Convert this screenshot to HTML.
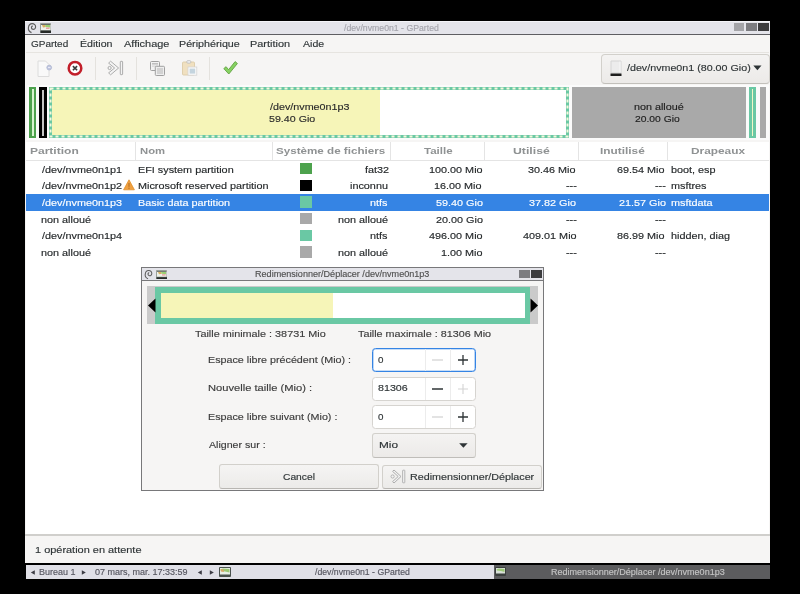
<!DOCTYPE html>
<html><head><meta charset="utf-8">
<style>
html,body{margin:0;padding:0;width:800px;height:594px;overflow:hidden;background:#000;}
body{position:relative;font-family:"Liberation Sans",sans-serif;}
.a{position:absolute;}
.t{position:absolute;white-space:pre;line-height:12px;transform-origin:0 0;-webkit-text-stroke:0.15px currentColor;}
</style></head><body>
<div style="position:absolute;left:0;top:0;width:800px;height:594px;overflow:hidden;filter:blur(0.35px);"><!-- main window -->
<div class="a" style="left:25px;top:21px;width:745px;height:542px;background:#f6f5f4;"></div>
<!-- title bar -->
<div class="a" style="left:25px;top:21px;width:745px;height:13px;background:#e4e4ea;"></div>
<div class="a" style="left:25px;top:21px;width:745px;height:1px;background:#f4f4f8;"></div>
<div class="a" style="left:25px;top:34px;width:745px;height:1px;background:#5e5e62;"></div>
<svg class="a" style="left:26px;top:22px;" width="12" height="12" viewBox="0 0 12 12"><path d="M5.5 10.6 C3 9.6 2.2 7.5 2.4 5.8 C2.7 3 4.5 1.7 6.2 1.7 C8.3 1.7 9.7 3.2 9.6 5 C9.5 6.7 8.3 7.5 7 7.3 C5.9 7.1 5.3 6.2 5.5 5.2 C5.7 4.5 6.2 4.1 6.8 4.2" fill="none" stroke="#5c5c5c" stroke-width="1.15"/></svg>
<svg class="a" style="left:40px;top:23px;" width="11" height="10" viewBox="0 0 11 10" preserveAspectRatio="none"><rect x="0" y="0" width="11" height="10" rx="0.8" fill="#9aa09a"/><rect x="1" y="1" width="9.5" height="6" fill="#eef2ea"/><rect x="1" y="1" width="9.5" height="1" fill="#6a6e6a"/><path d="M2 2 L5 2 L6 4 L3 4.5 Z" fill="#d8b060"/><path d="M5 2 L10 2 L10 4.5 L6 4 Z" fill="#98d070"/><rect x="6" y="4.6" width="3.5" height="1.2" fill="#e89090"/><rect x="0.5" y="7.6" width="10.5" height="2.4" fill="#262a28"/></svg>
<div class="a" style="left:734px;top:23px;width:10px;height:8px;background:#a4a4a8;"></div>
<div class="a" style="left:746px;top:23px;width:11px;height:8px;background:#7c7c80;"></div>
<div class="a" style="left:758px;top:23px;width:11px;height:8px;background:#3c3c3e;"></div>

<!-- menu bar bottom -->
<div class="a" style="left:26px;top:52px;width:743px;height:1px;background:#e6e4e0;"></div>

<!-- toolbar: new -->
<svg class="a" style="left:36px;top:59px;" width="17" height="19" viewBox="0 0 17 19"><path d="M2 2 L9.5 2 L13 5.5 L13 17.5 L2 17.5 Z" fill="#f9f9f9" stroke="#dcdcdc" stroke-width="1"/><circle cx="13.2" cy="8.6" r="2.4" fill="#c0c6e0" stroke="#a8b0cc" stroke-width="0.7"/><rect x="12" y="8.2" width="2.4" height="0.8" fill="#f0f2fa"/></svg>
<!-- toolbar: delete -->
<svg class="a" style="left:66px;top:59px;" width="18" height="18" viewBox="0 0 18 18"><circle cx="9" cy="9.2" r="6.3" fill="#fff" stroke="#c21f2a" stroke-width="2.5"/><path d="M6.9 7.1 L11.1 11.3 M11.1 7.1 L6.9 11.3" stroke="#3a3a3a" stroke-width="1.6"/></svg>
<!-- separators -->
<div class="a" style="left:95px;top:57px;width:1px;height:23px;background:#e4e2de;"></div>
<div class="a" style="left:136px;top:57px;width:1px;height:23px;background:#e4e2de;"></div>
<div class="a" style="left:209px;top:57px;width:1px;height:23px;background:#e4e2de;"></div>
<!-- toolbar: resize/move -->
<svg class="a" style="left:107px;top:60px;" width="17" height="16" viewBox="0 0 17 16"><path d="M3.6 1.2 L11.6 8 L3.6 14.8 L1.6 12.9 L7.6 8 L1.6 3.1 Z" fill="#f4f4f4" stroke="#a4a4a4" stroke-width="0.9" stroke-linejoin="round"/><circle cx="2.6" cy="8" r="1.6" fill="#f4f4f4" stroke="#a4a4a4" stroke-width="0.9"/><rect x="13.3" y="1.3" width="2.3" height="13.4" rx="0.6" fill="#f4f4f4" stroke="#a4a4a4" stroke-width="0.9"/></svg>
<!-- toolbar: copy -->
<svg class="a" style="left:149px;top:60px;" width="17" height="17" viewBox="0 0 17 17"><rect x="1.5" y="1.5" width="9" height="9" rx="1" fill="#f2f2f2" stroke="#a0a0a0" stroke-width="1"/><rect x="3" y="3" width="6" height="1.6" fill="#c0c0c0"/><rect x="3" y="5.6" width="6" height="1" fill="#d0d0d0"/><rect x="6.3" y="6.3" width="9.2" height="9.2" rx="1" fill="#eeeeee" stroke="#a0a0a0" stroke-width="1"/><rect x="8" y="8" width="6" height="6" fill="#d2d2d2"/></svg>
<!-- toolbar: paste -->
<svg class="a" style="left:181px;top:59px;" width="17" height="18" viewBox="0 0 17 18"><rect x="1.5" y="3" width="12" height="13" rx="1" fill="#f0e0c0" stroke="#dccca8" stroke-width="0.9"/><rect x="5.8" y="1.6" width="4" height="2.6" rx="1" fill="#ececec" stroke="#b8b8b8" stroke-width="0.7"/><rect x="7" y="8" width="8.8" height="8.2" fill="#fafafa" stroke="#d4d4d4" stroke-width="0.8"/><rect x="8.6" y="9.6" width="5.6" height="5" fill="#c4d4de"/></svg>
<!-- toolbar: apply -->
<svg class="a" style="left:222px;top:60px;" width="17" height="16" viewBox="0 0 17 16"><path d="M1.8 8.6 L4.1 6.7 L6.6 9.7 L13.1 1.6 L15.4 3.5 L6.8 14 Z" fill="#86d262" stroke="#62a242" stroke-width="0.9" stroke-linejoin="round"/></svg>

<!-- device combo -->
<div class="a" style="left:601px;top:54px;width:169px;height:29.5px;box-sizing:border-box;border:1px solid #d2d0cb;border-bottom-color:#c2c0bb;border-radius:4px;background:linear-gradient(#f4f3f2,#eceae8);"></div>
<svg class="a" style="left:609px;top:60px;" width="15" height="17" viewBox="0 0 15 17"><path d="M2 1 L12 1 L12 13 L2 13 Z" fill="#ececec" stroke="#d4d4d4" stroke-width="1"/><path d="M11 1.5 L11 12.5" stroke="#f8f8f8" stroke-width="1"/><rect x="1.5" y="13.5" width="11" height="2.5" fill="#1e1e1e"/></svg>
<svg class="a" style="left:753px;top:65px;" width="9" height="6" viewBox="0 0 9 6"><path d="M0.3 0.5 L8.5 0.5 L4.4 5.2 Z" fill="#2e3436"/></svg>

<!-- partition bar -->
<div class="a" style="left:27px;top:85px;width:742px;height:55px;background:#fbfbfb;"></div>
<div class="a" style="left:29px;top:87px;width:7px;height:51px;background:#4da24d;"></div>
<div class="a" style="left:32px;top:89px;width:2px;height:47px;background:#d8f4d0;"></div>
<div class="a" style="left:39px;top:87px;width:8px;height:51px;background:#000;"></div>
<div class="a" style="left:41.5px;top:89.5px;width:2.5px;height:46px;background:#c4c4c4;"></div>
<!-- p3 with dashed border -->
<div class="a" style="left:49px;top:87px;width:520px;height:51px;background:#fff;"></div>
<div class="a" style="left:52px;top:90px;width:328px;height:45px;background:#f6f5b8;"></div>
<svg class="a" style="left:49px;top:87px;" width="520" height="51"><rect x="1.5" y="1.5" width="517" height="48" fill="none" stroke="#6ac8a4" stroke-width="3"/><rect x="1.5" y="1.5" width="517" height="48" fill="none" stroke="#f4f8dc" stroke-width="2" stroke-dasharray="3 3"/></svg>
<div class="a" style="left:571.5px;top:87px;width:174.5px;height:51px;background:#a9a9a9;"></div>
<div class="a" style="left:749px;top:87px;width:7px;height:51px;background:#6ac8a4;"></div>
<div class="a" style="left:751.8px;top:89px;width:1.6px;height:47px;background:#f4f6c8;"></div>
<div class="a" style="left:759.5px;top:87px;width:6.5px;height:51px;background:#a9a9a9;"></div>

<!-- table -->
<div class="a" style="left:26px;top:142px;width:743px;height:392px;background:#fff;"></div>
<div class="a" style="left:26px;top:160px;width:743px;height:1px;background:#e4e4e4;"></div>
<div class="a" style="left:135px;top:142px;width:1px;height:18px;background:#e4e4e4;"></div>
<div class="a" style="left:272px;top:142px;width:1px;height:18px;background:#e4e4e4;"></div>
<div class="a" style="left:390px;top:142px;width:1px;height:18px;background:#e4e4e4;"></div>
<div class="a" style="left:484px;top:142px;width:1px;height:18px;background:#e4e4e4;"></div>
<div class="a" style="left:578px;top:142px;width:1px;height:18px;background:#e4e4e4;"></div>
<div class="a" style="left:667px;top:142px;width:1px;height:18px;background:#e4e4e4;"></div>
<!-- selected row -->
<div class="a" style="left:26px;top:193.8px;width:743px;height:16.8px;background:#3584e4;"></div>
<!-- fs color squares -->
<div class="a" style="left:300.2px;top:163.00px;width:11.5px;height:11.3px;background:#4da24d;"></div>
<div class="a" style="left:300.2px;top:179.65px;width:11.5px;height:11.3px;background:#000;"></div>
<div class="a" style="left:300.2px;top:196.30px;width:11.5px;height:11.3px;background:#6ac8a4;"></div>
<div class="a" style="left:300.2px;top:212.95px;width:11.5px;height:11.3px;background:#a9a9a9;"></div>
<div class="a" style="left:300.2px;top:229.60px;width:11.5px;height:11.3px;background:#6ac8a4;"></div>
<div class="a" style="left:300.2px;top:246.25px;width:11.5px;height:11.3px;background:#a9a9a9;"></div>
<!-- warning icon -->
<svg class="a" style="left:123px;top:179px;" width="12" height="12" viewBox="0 0 12 12"><path d="M6 0.8 L11.4 10.8 L0.6 10.8 Z" fill="#f0a040" stroke="#e0902c" stroke-width="0.8" stroke-linejoin="round"/><rect x="5.3" y="4" width="1.4" height="3.8" fill="#c07a2a"/><rect x="5.3" y="8.6" width="1.4" height="1.3" fill="#c07a2a"/></svg>

<!-- status bar -->
<div class="a" style="left:25px;top:534px;width:745px;height:2px;background:#d0cfcc;"></div>

<div class="t" style="left:344.30px;top:22px;font-size:8.8px;transform:scaleX(0.9896);color:#a4a4ac;">/dev/nvme0n1 - GParted</div>
<div class="t" style="left:31.25px;top:38px;font-size:9.8px;transform:scaleX(1.0208);color:#2e3436;">GParted</div>
<div class="t" style="left:79.52px;top:38px;font-size:9.8px;transform:scaleX(1.0828);color:#2e3436;">Édition</div>
<div class="t" style="left:124.00px;top:38px;font-size:9.8px;transform:scaleX(1.1175);color:#2e3436;">Affichage</div>
<div class="t" style="left:179.41px;top:38px;font-size:9.8px;transform:scaleX(1.0944);color:#2e3436;">Périphérique</div>
<div class="t" style="left:250.39px;top:38px;font-size:9.8px;transform:scaleX(1.1143);color:#2e3436;">Partition</div>
<div class="t" style="left:303.00px;top:38px;font-size:9.8px;transform:scaleX(1.0789);color:#2e3436;">Aide</div>
<div class="t" style="left:627.00px;top:62px;font-size:9.8px;transform:scaleX(1.092);color:#2e3436;">/dev/nvme0n1 (80.00 Gio)</div>
<div class="t" style="left:270.00px;top:101px;font-size:9.8px;transform:scaleX(1.0972);color:#2b2b2b;">/dev/nvme0n1p3</div>
<div class="t" style="left:268.91px;top:113px;font-size:9.8px;transform:scaleX(1.0878);color:#2b2b2b;">59.40 Gio</div>
<div class="t" style="left:633.70px;top:101px;font-size:9.8px;transform:scaleX(1.1);color:#1e1e1e;">non alloué</div>
<div class="t" style="left:634.80px;top:113px;font-size:9.8px;transform:scaleX(1.0524);color:#1e1e1e;">20.00 Gio</div>
<div class="t" style="left:29.77px;top:145px;font-size:9.8px;transform:scaleX(1.2263);color:#8f9293;font-weight:bold;-webkit-text-stroke:0;">Partition</div>
<div class="t" style="left:139.85px;top:145px;font-size:9.8px;transform:scaleX(1.15);color:#8f9293;font-weight:bold;-webkit-text-stroke:0;">Nom</div>
<div class="t" style="left:276.31px;top:145px;font-size:9.8px;transform:scaleX(1.1868);color:#8f9293;font-weight:bold;-webkit-text-stroke:0;">Système de fichiers</div>
<div class="t" style="left:423.75px;top:145px;font-size:9.8px;transform:scaleX(1.1771);color:#8f9293;font-weight:bold;-webkit-text-stroke:0;">Taille</div>
<div class="t" style="left:512.50px;top:145px;font-size:9.8px;transform:scaleX(1.25);color:#8f9293;font-weight:bold;-webkit-text-stroke:0;">Utilisé</div>
<div class="t" style="left:599.79px;top:145px;font-size:9.8px;transform:scaleX(1.2083);color:#8f9293;font-weight:bold;-webkit-text-stroke:0;">Inutilisé</div>
<div class="t" style="left:691.29px;top:145px;font-size:9.8px;transform:scaleX(1.2093);color:#8f9293;font-weight:bold;-webkit-text-stroke:0;">Drapeaux</div>
<div class="t" style="left:42.40px;top:164px;font-size:9.8px;transform:scaleX(1.1051);color:#24282a;">/dev/nvme0n1p1</div>
<div class="t" style="left:137.89px;top:164px;font-size:9.8px;transform:scaleX(1.1051);color:#24282a;">EFI system partition</div>
<div class="t" style="left:364.79px;top:164px;font-size:9.8px;transform:scaleX(1.1051);color:#24282a;">fat32</div>
<div class="t" style="left:428.96px;top:164px;font-size:9.8px;transform:scaleX(1.1051);color:#24282a;">100.00 Mio</div>
<div class="t" style="left:528.23px;top:164px;font-size:9.8px;transform:scaleX(1.1051);color:#24282a;">30.46 Mio</div>
<div class="t" style="left:617.48px;top:164px;font-size:9.8px;transform:scaleX(1.1051);color:#24282a;">69.54 Mio</div>
<div class="t" style="left:670.64px;top:164px;font-size:9.8px;transform:scaleX(1.1051);color:#24282a;">boot, esp</div>
<div class="t" style="left:42.40px;top:180px;font-size:9.8px;transform:scaleX(1.1051);color:#24282a;">/dev/nvme0n1p2</div>
<div class="t" style="left:137.89px;top:180px;font-size:9.8px;transform:scaleX(1.1051);color:#24282a;">Microsoft reserved partition</div>
<div class="t" style="left:350.43px;top:180px;font-size:9.8px;transform:scaleX(1.1051);color:#24282a;">inconnu</div>
<div class="t" style="left:434.48px;top:180px;font-size:9.8px;transform:scaleX(1.1051);color:#24282a;">16.00 Mio</div>
<div class="t" style="left:565.80px;top:180px;font-size:9.8px;transform:scaleX(1.1051);color:#24282a;">---</div>
<div class="t" style="left:655.05px;top:180px;font-size:9.8px;transform:scaleX(1.1051);color:#24282a;">---</div>
<div class="t" style="left:670.64px;top:180px;font-size:9.8px;transform:scaleX(1.1051);color:#24282a;">msftres</div>
<div class="t" style="left:42.40px;top:197px;font-size:9.8px;transform:scaleX(1.1051);color:#ffffff;">/dev/nvme0n1p3</div>
<div class="t" style="left:137.89px;top:197px;font-size:9.8px;transform:scaleX(1.1051);color:#ffffff;">Basic data partition</div>
<div class="t" style="left:370.32px;top:197px;font-size:9.8px;transform:scaleX(1.1051);color:#ffffff;">ntfs</div>
<div class="t" style="left:435.59px;top:197px;font-size:9.8px;transform:scaleX(1.1051);color:#ffffff;">59.40 Gio</div>
<div class="t" style="left:529.34px;top:197px;font-size:9.8px;transform:scaleX(1.1051);color:#ffffff;">37.82 Gio</div>
<div class="t" style="left:618.59px;top:197px;font-size:9.8px;transform:scaleX(1.1051);color:#ffffff;">21.57 Gio</div>
<div class="t" style="left:670.64px;top:197px;font-size:9.8px;transform:scaleX(1.1051);color:#ffffff;">msftdata</div>
<div class="t" style="left:41.29px;top:214px;font-size:9.8px;transform:scaleX(1.1051);color:#24282a;">non alloué</div>
<div class="t" style="left:338.27px;top:214px;font-size:9.8px;transform:scaleX(1.1051);color:#24282a;">non alloué</div>
<div class="t" style="left:435.59px;top:214px;font-size:9.8px;transform:scaleX(1.1051);color:#24282a;">20.00 Gio</div>
<div class="t" style="left:565.80px;top:214px;font-size:9.8px;transform:scaleX(1.1051);color:#24282a;">---</div>
<div class="t" style="left:655.05px;top:214px;font-size:9.8px;transform:scaleX(1.1051);color:#24282a;">---</div>
<div class="t" style="left:42.40px;top:230px;font-size:9.8px;transform:scaleX(1.1051);color:#24282a;">/dev/nvme0n1p4</div>
<div class="t" style="left:370.32px;top:230px;font-size:9.8px;transform:scaleX(1.1051);color:#24282a;">ntfs</div>
<div class="t" style="left:428.96px;top:230px;font-size:9.8px;transform:scaleX(1.1051);color:#24282a;">496.00 Mio</div>
<div class="t" style="left:522.71px;top:230px;font-size:9.8px;transform:scaleX(1.1051);color:#24282a;">409.01 Mio</div>
<div class="t" style="left:617.48px;top:230px;font-size:9.8px;transform:scaleX(1.1051);color:#24282a;">86.99 Mio</div>
<div class="t" style="left:670.64px;top:230px;font-size:9.8px;transform:scaleX(1.1051);color:#24282a;">hidden, diag</div>
<div class="t" style="left:41.29px;top:247px;font-size:9.8px;transform:scaleX(1.1051);color:#24282a;">non alloué</div>
<div class="t" style="left:338.27px;top:247px;font-size:9.8px;transform:scaleX(1.1051);color:#24282a;">non alloué</div>
<div class="t" style="left:441.11px;top:247px;font-size:9.8px;transform:scaleX(1.1051);color:#24282a;">1.00 Mio</div>
<div class="t" style="left:565.80px;top:247px;font-size:9.8px;transform:scaleX(1.1051);color:#24282a;">---</div>
<div class="t" style="left:655.05px;top:247px;font-size:9.8px;transform:scaleX(1.1051);color:#24282a;">---</div>
<div class="t" style="left:34.88px;top:544px;font-size:9.8px;transform:scaleX(1.117);color:#2e3436;">1 opération en attente</div>

<!-- taskbar -->
<div class="a" style="left:0;top:563px;width:800px;height:31px;background:#000;"></div>
<div class="a" style="left:26px;top:565px;width:468px;height:13.5px;background:#e0e0e7;"></div>
<div class="a" style="left:494px;top:565px;width:276px;height:13.5px;background:#5c5c5e;"></div>
<svg class="a" style="left:30px;top:570px;" width="6" height="5" viewBox="0 0 6 5"><path d="M0.8 2.5 L4.8 0.3 L4.8 4.7 Z" fill="#3c3c44"/></svg>
<svg class="a" style="left:80.5px;top:570px;" width="6" height="5" viewBox="0 0 6 5"><path d="M4.8 2.5 L0.8 0.3 L0.8 4.7 Z" fill="#3c3c44"/></svg>
<svg class="a" style="left:196.5px;top:570px;" width="6" height="5" viewBox="0 0 6 5"><path d="M0.8 2.5 L4.8 0.3 L4.8 4.7 Z" fill="#3c3c44"/></svg>
<svg class="a" style="left:208.5px;top:570px;" width="6" height="5" viewBox="0 0 6 5"><path d="M4.8 2.5 L0.8 0.3 L0.8 4.7 Z" fill="#3c3c44"/></svg>
<svg class="a" style="left:219px;top:567px;" width="12" height="10" viewBox="0 0 12 10"><rect x="0" y="0" width="12" height="10" rx="1" fill="#4a524e"/><rect x="1" y="1" width="10" height="6.5" fill="#e8efe8"/><path d="M1.5 2.5 L4 1.5 L10.5 2 L10.5 5.5 L6 4.5 L2 4 Z" fill="#9cc874"/><path d="M1.5 2 L4.5 2.5 L5 5 L2 4.5Z" fill="#d8a868"/></svg>
<svg class="a" style="left:495px;top:567px;" width="11" height="9" viewBox="0 0 11 9"><rect x="0" y="0" width="11" height="9" rx="1" fill="#3a3e3c"/><rect x="1" y="1" width="9" height="5.5" fill="#d8e0d8"/><path d="M1.5 2.5 L4 1.5 L9.5 2 L9.5 5 L6 4 L2 3.5 Z" fill="#9cc874"/></svg>

<div class="t" style="left:38.98px;top:566px;font-size:8.8px;transform:scaleX(1.0206);color:#55555f;">Bureau 1</div>
<div class="t" style="left:95.00px;top:566px;font-size:8.8px;transform:scaleX(1.0222);color:#55555f;">07 mars, mar. 17:33:59</div>
<div class="t" style="left:315.00px;top:566px;font-size:8.8px;transform:scaleX(0.9896);color:#55555f;">/dev/nvme0n1 - GParted</div>
<div class="t" style="left:550.97px;top:566px;font-size:8.8px;transform:scaleX(1.0268);color:#c4c4c4;">Redimensionner/Déplacer /dev/nvme0n1p3</div>
<!-- dialog -->
<div class="a" style="left:141px;top:267px;width:403px;height:224px;box-sizing:border-box;border:1px solid #78787a;background:#f6f5f4;"></div>
<div class="a" style="left:142px;top:268px;width:401px;height:12px;background:#e4e4ea;"></div>
<div class="a" style="left:142px;top:280px;width:401px;height:1px;background:#78787a;"></div>
<svg class="a" style="left:142.5px;top:269px;" width="11" height="11" viewBox="0 0 12 12"><path d="M5.5 10.6 C3 9.6 2.2 7.5 2.4 5.8 C2.7 3 4.5 1.7 6.2 1.7 C8.3 1.7 9.7 3.2 9.6 5 C9.5 6.7 8.3 7.5 7 7.3 C5.9 7.1 5.3 6.2 5.5 5.2 C5.7 4.5 6.2 4.1 6.8 4.2" fill="none" stroke="#5c5c5c" stroke-width="1.15"/></svg>
<svg class="a" style="left:156px;top:269.5px;" width="11" height="9.5" viewBox="0 0 11 10" preserveAspectRatio="none"><rect x="0" y="0" width="11" height="10" rx="0.8" fill="#9aa09a"/><rect x="1" y="1" width="9.5" height="6" fill="#eef2ea"/><rect x="1" y="1" width="9.5" height="1" fill="#6a6e6a"/><path d="M2 2 L5 2 L6 4 L3 4.5 Z" fill="#d8b060"/><path d="M5 2 L10 2 L10 4.5 L6 4 Z" fill="#98d070"/><rect x="6" y="4.6" width="3.5" height="1.2" fill="#e89090"/><rect x="0.5" y="7.6" width="10.5" height="2.4" fill="#262a28"/></svg>
<div class="a" style="left:519px;top:270px;width:11px;height:8px;background:#7c7c80;"></div>
<div class="a" style="left:531px;top:270px;width:11px;height:8px;background:#3c3c3e;"></div>
<!-- resizer -->
<div class="a" style="left:147px;top:286px;width:391px;height:38px;background:#cacaca;"></div>
<div class="a" style="left:154.5px;top:287px;width:375px;height:37px;background:#6ac8a4;"></div>
<div class="a" style="left:160.5px;top:293px;width:364px;height:25px;background:#fff;"></div>
<div class="a" style="left:160.5px;top:293px;width:172px;height:25px;background:#f6f5b8;"></div>
<svg class="a" style="left:147px;top:298px;" width="9" height="15" viewBox="0 0 9 15"><path d="M1 7.5 L8.5 0.5 L8.5 14.5 Z" fill="#000"/></svg>
<svg class="a" style="left:529.5px;top:298px;" width="9" height="15" viewBox="0 0 9 15"><path d="M8 7.5 L0.5 0.5 L0.5 14.5 Z" fill="#000"/></svg>

<!-- spin 1 -->
<div class="a" style="left:372px;top:348px;width:104px;height:24px;box-sizing:border-box;border:1px solid #3584e4;box-shadow:inset 0 0 0 0.6px rgba(53,132,228,0.55);border-radius:3.5px;background:#fff;"></div>
<div class="a" style="left:425px;top:349px;width:1px;height:22px;background:#ececec;"></div>
<div class="a" style="left:450px;top:349px;width:1px;height:22px;background:#ececec;"></div>
<svg class="a" style="left:431px;top:354px;" width="14" height="12" viewBox="0 0 14 12"><path d="M1 6 H12" stroke="#d4d4d4" stroke-width="1.3"/></svg>
<svg class="a" style="left:457px;top:354px;" width="12" height="12" viewBox="0 0 12 12"><path d="M1 6 H11 M6 1 V11" stroke="#2e3436" stroke-width="1.3"/></svg>
<!-- spin 2 -->
<div class="a" style="left:372px;top:376.5px;width:104px;height:24px;box-sizing:border-box;border:1px solid #d6d4d0;border-radius:3.5px;background:#fff;"></div>
<div class="a" style="left:425px;top:377.5px;width:1px;height:22px;background:#ececec;"></div>
<div class="a" style="left:450px;top:377.5px;width:1px;height:22px;background:#ececec;"></div>
<svg class="a" style="left:431px;top:382.5px;" width="14" height="12" viewBox="0 0 14 12"><path d="M1 6 H12" stroke="#2e3436" stroke-width="1.5"/></svg>
<svg class="a" style="left:457px;top:382.5px;" width="12" height="12" viewBox="0 0 12 12"><path d="M1 6 H11 M6 1 V11" stroke="#d4d4d4" stroke-width="1.1"/></svg>
<!-- spin 3 -->
<div class="a" style="left:372px;top:404.5px;width:104px;height:24px;box-sizing:border-box;border:1px solid #d6d4d0;border-radius:3.5px;background:#fff;"></div>
<div class="a" style="left:425px;top:405.5px;width:1px;height:22px;background:#ececec;"></div>
<div class="a" style="left:450px;top:405.5px;width:1px;height:22px;background:#ececec;"></div>
<svg class="a" style="left:431px;top:410.5px;" width="14" height="12" viewBox="0 0 14 12"><path d="M1 6 H12" stroke="#d4d4d4" stroke-width="1.3"/></svg>
<svg class="a" style="left:457px;top:410.5px;" width="12" height="12" viewBox="0 0 12 12"><path d="M1 6 H11 M6 1 V11" stroke="#2e3436" stroke-width="1.3"/></svg>
<!-- combo -->
<div class="a" style="left:372px;top:432.5px;width:104px;height:25px;box-sizing:border-box;border:1px solid #d2d0cb;border-bottom-color:#bfbdb9;border-radius:3px;background:linear-gradient(#f4f3f2,#eceae8);"></div>
<svg class="a" style="left:459px;top:442.5px;" width="9" height="6" viewBox="0 0 9 6"><path d="M0.2 0.3 L8.6 0.3 L4.4 4.8 Z" fill="#2e3436"/></svg>
<!-- buttons -->
<div class="a" style="left:219px;top:464px;width:160px;height:25px;box-sizing:border-box;border:1px solid #d2d0cb;border-bottom-color:#b8b6b2;border-radius:3px;background:linear-gradient(#f5f4f3,#ecebe9);"></div>
<div class="a" style="left:382px;top:465px;width:160px;height:24px;box-sizing:border-box;border:1px solid #d2d0cb;border-bottom-color:#b8b6b2;border-radius:3px;background:linear-gradient(#f5f4f3,#ecebe9);"></div>
<svg class="a" style="left:390px;top:469px;" width="16" height="15" viewBox="0 0 16 15"><path d="M4 1 L11 7.5 L4 14 L2.6 12.6 L8.2 7.5 L2.6 2.4 Z" fill="#f2f2f2" stroke="#a6a6a6" stroke-width="0.9"/><circle cx="2.6" cy="7.5" r="1.6" fill="#f2f2f2" stroke="#a6a6a6" stroke-width="0.8"/><rect x="12.6" y="1.2" width="2.2" height="12.6" rx="0.5" fill="#f2f2f2" stroke="#a6a6a6" stroke-width="0.8"/></svg>

<div class="t" style="left:254.99px;top:268px;font-size:9px;transform:scaleX(1.0076);color:#505050;">Redimensionner/Déplacer /dev/nvme0n1p3</div>
<div class="t" style="left:194.50px;top:328px;font-size:9.8px;transform:scaleX(1.1059);color:#3c3c3c;">Taille minimale : 38731 Mio</div>
<div class="t" style="left:357.50px;top:328px;font-size:9.8px;transform:scaleX(1.1008);color:#3c3c3c;">Taille maximale : 81306 Mio</div>
<div class="t" style="left:207.66px;top:354px;font-size:9.8px;transform:scaleX(1.095);color:#3c3c3c;">Espace libre précédent (Mio) :</div>
<div class="t" style="left:207.61px;top:382px;font-size:9.8px;transform:scaleX(1.1389);color:#3c3c3c;">Nouvelle taille (Mio) :</div>
<div class="t" style="left:207.65px;top:411px;font-size:9.8px;transform:scaleX(1.0953);color:#3c3c3c;">Espace libre suivant (Mio) :</div>
<div class="t" style="left:208.75px;top:439px;font-size:9.8px;transform:scaleX(1.0837);color:#3c3c3c;">Aligner sur :</div>
<div class="t" style="left:378.00px;top:354px;font-size:9.8px;transform:scaleX(1.0);color:#2e3436;">0</div>
<div class="t" style="left:378.00px;top:382px;font-size:9.8px;transform:scaleX(1.0926);color:#2e3436;">81306</div>
<div class="t" style="left:378.00px;top:411px;font-size:9.8px;transform:scaleX(1.0);color:#2e3436;">0</div>
<div class="t" style="left:379.29px;top:439px;font-size:9.8px;transform:scaleX(1.2071);color:#2e3436;">Mio</div>
<div class="t" style="left:282.90px;top:471px;font-size:9.8px;transform:scaleX(1.0467);color:#2e3436;">Cancel</div>
<div class="t" style="left:409.90px;top:471px;font-size:9.8px;transform:scaleX(1.0964);color:#2e3436;">Redimensionner/Déplacer</div>
</div></body></html>
